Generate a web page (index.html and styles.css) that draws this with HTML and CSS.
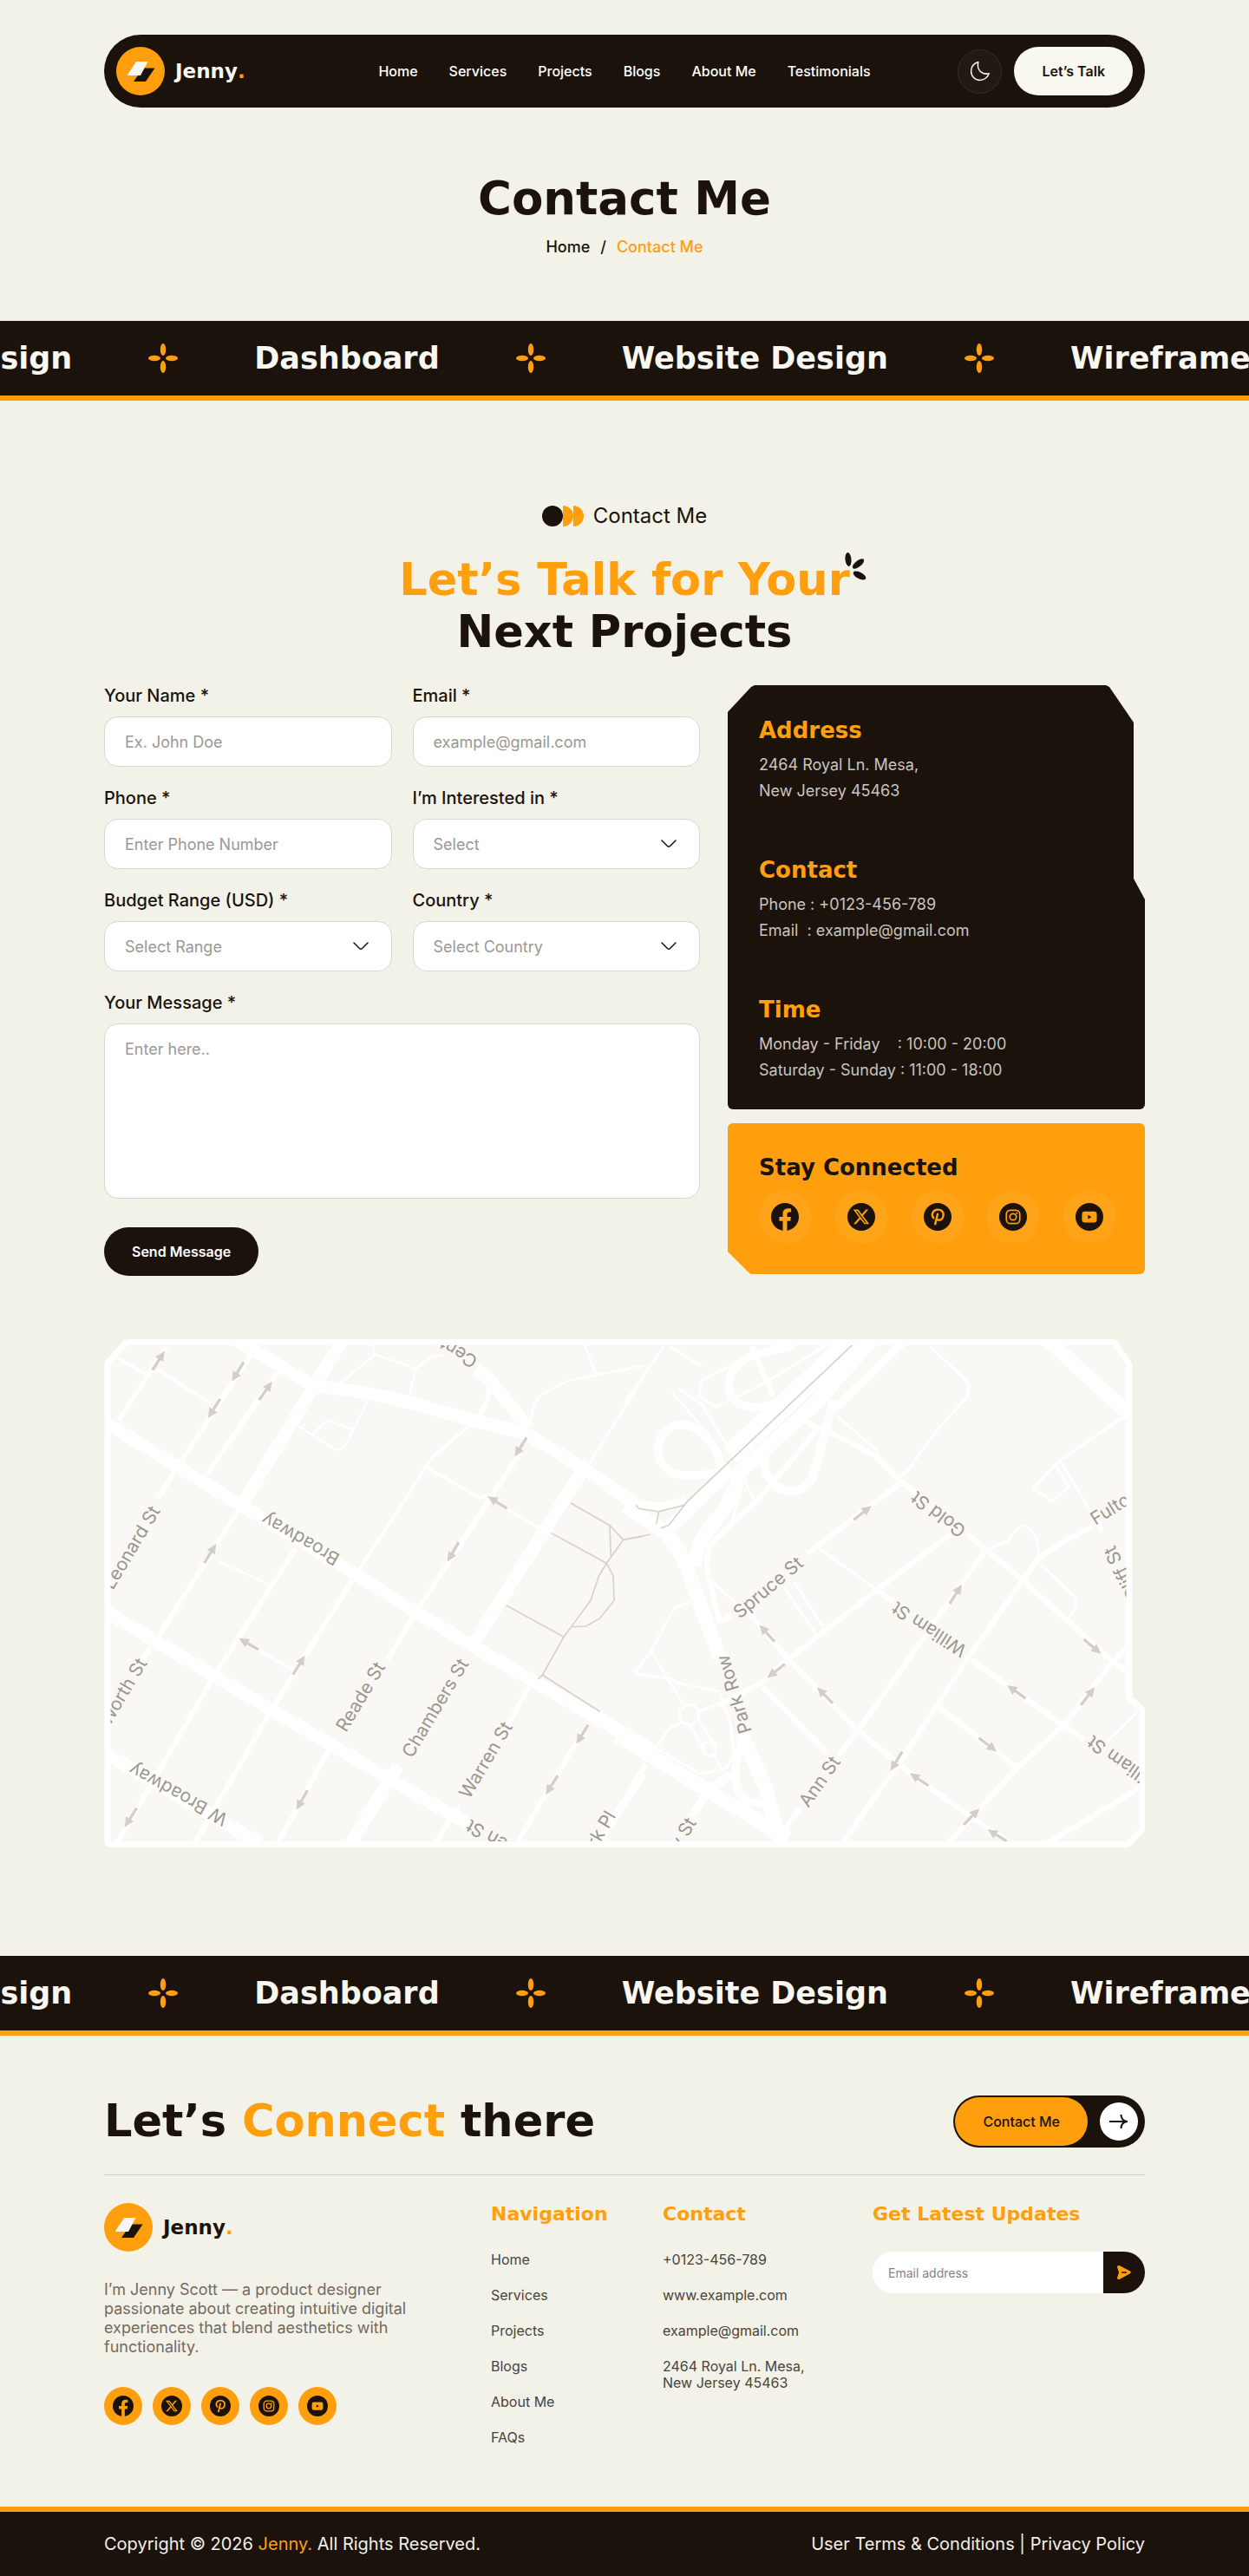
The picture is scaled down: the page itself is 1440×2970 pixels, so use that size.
FILE: index.html
```html
<!DOCTYPE html>
<html lang="en">
<head>
<meta charset="UTF-8">
<meta name="viewport" content="width=device-width, initial-scale=1.0">
<title>Contact Me - Jenny</title>
<link rel="stylesheet" href="styles.css">
</head>
<body>

<!-- shared icons -->
<svg class="sprite" aria-hidden="true">
  <symbol id="logo" viewBox="0 0 56 56">
    <circle cx="28" cy="28" r="28" fill="#ff9f0d"/>
    <path d="M31 24.500h13.500L34 40H20z" fill="#1b120c"/>
    <path d="M23 17h13.500L28 33H12.500z" fill="#f8f7f0"/>
  </symbol>
  <symbol id="star" viewBox="0 0 34 34">
    <ellipse cx="17" cy="7" rx="3.200" ry="7"/>
    <ellipse cx="17" cy="27" rx="3.200" ry="7"/>
    <ellipse cx="7" cy="17" rx="7" ry="3.200"/>
    <ellipse cx="27" cy="17" rx="7" ry="3.200"/>
  </symbol>
  <symbol id="chevron" viewBox="0 0 18 10">
    <path d="M1 1l6.500 6.500q1.500 1.300 3 0L17 1" fill="none" stroke="#1b120c" stroke-width="1.500" stroke-linecap="round"/>
  </symbol>
  <symbol id="facebook" viewBox="0 0 24 24">
    <path fill="#1b120c" d="M24 12.073c0-6.627-5.373-12-12-12s-12 5.373-12 12c0 5.990 4.388 10.954 10.125 11.854v-8.385H7.078v-3.470h3.047V9.430c0-3.007 1.792-4.669 4.533-4.669 1.312 0 2.686.235 2.686.235v2.953H15.830c-1.491 0-1.956.925-1.956 1.874v2.250h3.328l-.532 3.470h-2.796v8.385C19.612 23.027 24 18.062 24 12.073z"/>
  </symbol>
  <symbol id="twitter" viewBox="0 0 24 24">
    <circle cx="12" cy="12" r="12" fill="#1b120c"/>
    <path fill="#ff9f0d" transform="translate(5 5) scale(.58)" d="M18.901 1.153h3.680l-8.040 9.190L24 22.846h-7.406l-5.800-7.584-6.638 7.584H.474l8.600-9.830L0 1.154h7.594l5.243 6.932ZM17.610 20.644h2.039L6.486 3.240H4.298Z"/>
  </symbol>
  <symbol id="pinterest" viewBox="0 0 24 24">
    <circle cx="12" cy="12" r="12" fill="#1b120c"/>
    <path fill="none" stroke="#ff9f0d" stroke-width="1.800" stroke-linecap="round" d="M8.400 12.900C6 9.600 8.200 5.700 12.300 5.700c3 0 4.900 2 4.700 4.500-.2 2.900-1.900 4.600-3.800 4.600-1.100 0-1.900-.6-2.100-1.400M12 9.500L9.900 18.300"/>
  </symbol>
  <symbol id="instagram" viewBox="0 0 24 24">
    <circle cx="12" cy="12" r="12" fill="#1b120c"/>
    <rect x="6.200" y="6.200" width="11.600" height="11.600" rx="3.400" fill="none" stroke="#ff9f0d" stroke-width="1.300"/>
    <circle cx="12" cy="12" r="2.800" fill="none" stroke="#ff9f0d" stroke-width="1.300"/>
    <circle cx="15.200" cy="8.800" r=".8" fill="#ff9f0d"/>
  </symbol>
  <symbol id="youtube" viewBox="0 0 24 24">
    <circle cx="12" cy="12" r="12" fill="#1b120c"/>
    <rect x="5.600" y="7.400" width="12.800" height="9.400" rx="2.400" fill="#ff9f0d"/>
    <path d="M10.800 10.400l3 1.700-3 1.700z" fill="#1b120c"/>
  </symbol>
</svg>

<header class="container">
  <div class="navbar">
    <a href="#" class="logo"><svg><use href="#logo"/></svg><span>Jenny<b>.</b></span></a>
    <nav class="menu">
      <a href="#">Home</a>
      <a href="#">Services</a>
      <a href="#">Projects</a>
      <a href="#">Blogs</a>
      <a href="#">About Me</a>
      <a href="#">Testimonials</a>
    </nav>
    <div class="nav-right">
      <button type="button" class="theme-btn" aria-label="Dark mode">
        <svg viewBox="0 0 24 24"><path d="M9.800 1.500C5 3 1.600 7 1.600 12.300c0 5.700 4.500 10.100 10 10.100 5 0 9.400-3.200 10.600-7.600-8.500 1.700-14.300-4-12.400-13.300z"/></svg>
      </button>
      <a href="#" class="talk-btn">Let’s Talk</a>
    </div>
  </div>
</header>

<section class="hero">
  <h1>Contact Me</h1>
  <p class="breadcrumb"><a href="#">Home</a><span>/</span><a href="#" class="active">Contact Me</a></p>
</section>

<div class="marquee">
  <div class="track">
    <span>Website Design</span>
    <svg><use href="#star"/></svg>
    <span>Dashboard</span>
    <svg><use href="#star"/></svg>
    <span>Website Design</span>
    <svg><use href="#star"/></svg>
    <span>Wireframe</span>
  </div>
</div>

<main class="container">
  <div class="section-head">
    <p class="eyebrow">
      <svg viewBox="0 0 48 24"><path d="M36 0a12 12 0 0 1 0 24zM24 0a12 12 0 0 1 0 24z" fill="#ff9f0d"/><circle cx="12" cy="12" r="12" fill="#1b120c"/></svg>
      Contact Me
    </p>
    <h2>
      <span class="highlight">Let’s Talk for Your<svg viewBox="0 0 26 32" aria-hidden="true"><ellipse cx="4" cy="8" rx="3.500" ry="8" transform="rotate(-5 4 8)"/><ellipse cx="15.500" cy="13" rx="8" ry="3.500" transform="rotate(-38 15.500 13)"/><ellipse cx="17" cy="26.500" rx="8" ry="3.800" transform="rotate(28 17 26.500)"/></svg></span><br>
      Next Projects
    </h2>
  </div>

  <div class="contact">
    <form class="contact-form">
      <div class="field">
        <label for="name">Your Name *</label>
        <input type="text" id="name" placeholder="Ex. John Doe">
      </div>
      <div class="field">
        <label for="email">Email *</label>
        <input type="email" id="email" placeholder="example@gmail.com">
      </div>
      <div class="field">
        <label for="phone">Phone *</label>
        <input type="tel" id="phone" placeholder="Enter Phone Number">
      </div>
      <div class="field">
        <label for="interest">I’m Interested in *</label>
        <div class="select">
          <select id="interest"><option>Select</option></select>
          <svg><use href="#chevron"/></svg>
        </div>
      </div>
      <div class="field">
        <label for="budget">Budget Range (USD) *</label>
        <div class="select">
          <select id="budget"><option>Select Range</option></select>
          <svg><use href="#chevron"/></svg>
        </div>
      </div>
      <div class="field">
        <label for="country">Country *</label>
        <div class="select">
          <select id="country"><option>Select Country</option></select>
          <svg><use href="#chevron"/></svg>
        </div>
      </div>
      <div class="field full">
        <label for="message">Your Message *</label>
        <textarea id="message" placeholder="Enter here.."></textarea>
      </div>
      <button type="submit" class="send-btn">Send Message</button>
    </form>

    <aside>
      <div class="info">
        <div>
          <h3>Address</h3>
          <p>2464 Royal Ln. Mesa,<br>New Jersey 45463</p>
        </div>
        <div>
          <h3>Contact</h3>
          <p>Phone : +0123-456-789<br>Email&nbsp; : example@gmail.com</p>
        </div>
        <div>
          <h3>Time</h3>
          <p>Monday - Friday&nbsp;&nbsp;&nbsp; : 10:00 - 20:00<br>Saturday - Sunday : 11:00 - 18:00</p>
        </div>
      </div>
      <div class="connected">
        <h3>Stay Connected</h3>
        <div class="social-big">
          <a href="#" aria-label="Facebook"><svg><use href="#facebook"/></svg></a>
          <a href="#" aria-label="X"><svg><use href="#twitter"/></svg></a>
          <a href="#" aria-label="Pinterest"><svg><use href="#pinterest"/></svg></a>
          <a href="#" aria-label="Instagram"><svg><use href="#instagram"/></svg></a>
          <a href="#" aria-label="YouTube"><svg><use href="#youtube"/></svg></a>
        </div>
      </div>
    </aside>
  </div>

  <svg class="map" viewBox="0 0 1200 586" role="img" aria-label="Map">
    <defs>
      <path id="frame" d="M5 26L24 5q2-1.500 4-1.500H1163q2 0 3 1.500L1181 27q1 2 1 4V411q0 3 2 4L1196 426q1.500 1 1.500 3V563q0 2-1.500 3L1182 581q-1 1.500-3 1.500H8q-4 0-4-4V30q0-2 1-4z"/>
      <clipPath id="frame-clip"><use href="#frame"/></clipPath>
      <g id="arrow"><path d="M-64-4h36v-9L0 0l-28 13V4h-36z"/></g>
    </defs>
    <use href="#frame" fill="#f9f8f4"/>
    <g clip-path="url(#frame-clip)">
      <!-- west half -->
      <g transform="translate(-20 -24) scale(.408)">
        <g class="road">
          <g stroke-width="36">
            <path d="M40 287L70 305 250 415 440 530 755 720 930 830 1090 925 1270 1030 1600 1222"/>
            <path d="M40 820L200 915 360 1010 520 1105 700 1210 860 1305 1080 1430"/>
            <path d="M40 1222L250 1345 490 1484"/>
            <path d="M420 60L640 190 800 212 900 235 1100 290 1240 325 1400 420 1570 540"/>
            <path d="M724 60L640 195 440 525"/>
            <path d="M1100 145Q1130 160 1160 200L1250 310"/>
            <path d="M1400 430L1090 925M880 1265L745 1484"/>
          </g>
          <g stroke-width="14">
            <path d="M225 80L90 290M465 100L250 430 200 510M540 150L340 440M430 540L205 895M180 930L150 975"/>
            <path d="M590 650L360 1010 85 1484M750 740L520 1110 305 1484M1225 380L930 830 850 965M700 1190L540 1484"/>
            <path d="M1250 1040L1190 1150M1050 1380L985 1484M1400 1170L1215 1484M1575 1290L1450 1484"/>
            <path d="M1135 195Q1140 245 1100 280"/>
          </g>
          <g stroke-width="9">
            <path d="M85 110L170 160M200 145L350 240M1190 540L1290 600M480 935L585 995"/>
            <path d="M1090 295L975 395 770 710M960 420L1110 508 1130 500"/>
          </g>
          <g stroke-width="6">
            <path d="M805 70L815 102 930 142 975 108 1010 104M815 102L715 185M930 142L912 215"/>
            <path d="M600 305L705 372Q725 370 735 350L795 230M640 325L680 288 752 315M370 685L510 750"/>
            <path d="M1405 70L1440 160 1575 132M1440 160L1360 176 1285 215Q1255 245 1255 300M1575 165L1420 410M1450 1111L1568 1185"/>
          </g>
        </g>
        <path class="trail" d="M1368 522L1478 585 1516 626 1570 616M1478 585L1481 672M1313 607L1469 692 1516 626M1469 692L1488 728 1490 798 1450 848 1410 870 1372 872M1469 692L1447 728 1425 795 1372 868 1348 900 1288 1008 1275 1020M1185 811L1348 900M1288 1008L1450 1111"/>
        <g class="arrows">
          <use href="#arrow" transform="translate(220 92) rotate(-58)"/>
          <use href="#arrow" transform="translate(410 178) rotate(122)"/>
          <use href="#arrow" transform="translate(343 282) rotate(122)"/>
          <use href="#arrow" transform="translate(524 178) rotate(-55)"/>
          <use href="#arrow" transform="translate(366 637) rotate(-58)"/>
          <use href="#arrow" transform="translate(430 904) rotate(210)"/>
          <use href="#arrow" transform="translate(617 952) rotate(-58)"/>
          <use href="#arrow" transform="translate(1209 391) rotate(122)"/>
          <use href="#arrow" transform="translate(1133 503) rotate(212)"/>
          <use href="#arrow" transform="translate(1019 688) rotate(120)"/>
          <use href="#arrow" transform="translate(592 1389) rotate(120)"/>
          <use href="#arrow" transform="translate(107 1438) rotate(122)"/>
          <use href="#arrow" transform="translate(1383 1203) rotate(122)"/>
          <use href="#arrow" transform="translate(1297 1346) rotate(122)"/>
        </g>
      </g>
      <!-- east half -->
      <g transform="translate(600 -24) scale(.408)">
        <g class="road">
          <path stroke-width="62" d="M640 70L300 385"/>
          <g stroke-width="40">
            <path d="M700 60L540 240 320 440M0 530L110 600Q160 650 185 730L270 960M300 420L130 590"/>
            <path d="M325 440Q300 520 260 570 195 640 200 700M330 1170L400 1330 440 1484"/>
            <path d="M-20 1180L230 1330 460 1470M1195 60L1430 275"/>
          </g>
          <g stroke-width="24">
            <path d="M0 500Q90 560 175 510M265 435Q190 450 145 440C90 420 80 350 120 315S230 310 265 390L275 430"/>
            <path d="M360 105Q300 130 295 185C295 245 350 270 440 235M360 105L480 76"/>
            <path d="M400 350C380 430 410 480 470 488Q520 485 535 440L570 310 590 230M785 70L590 260"/>
            <path d="M330 1200Q300 1290 325 1340 350 1380 395 1365M300 1290L240 1330 190 1410"/>
          </g>
          <g stroke-width="15">
            <path d="M360 80L420 220M570 320L640 350 710 390 775 455 825 495M970 610L1125 740 1380 970 1430 1005"/>
            <path d="M780 465L515 665M300 840L275 855M920 610L710 770 460 965 380 1035 260 1095"/>
            <path d="M705 765L760 800M980 965L1240 1150 1300 1190M350 830L460 960 660 1165 800 1280 960 1395 1085 1480"/>
            <path d="M1020 655L660 1165 605 1235M495 1385L440 1460M1320 590Q1220 640 1170 680L1125 740 970 960 885 1090 780 1250 615 1484"/>
            <path d="M1430 920L1380 970 1240 1150 1110 1270 990 1400 915 1484M885 1095L1110 1270M1460 1325L1195 1484M390 1040L570 1225"/>
            <path d="M60 1260L-60 1460M500 285L570 325M540 320L380 510 260 620Q220 660 240 740L270 860M1350 600L1325 560"/>
          </g>
          <g stroke-width="7">
            <path d="M865 80L965 175Q980 200 965 225L880 320 800 430 770 450M600 275L710 370 720 400M550 650L710 765"/>
            <path d="M450 760L540 890M480 745L560 870M245 740L340 830M1020 655L1085 628Q1120 570 1140 590 1175 620 1168 680M1165 685L1270 785Q1290 810 1250 850"/>
            <path d="M1415 275L1225 405 1155 480 1210 517 1255 475 1215 410M1230 400L1325 560M1450 1110L1360 1200"/>
            <path d="M135 210L240 330M155 200L220 245 290 360M580 70L400 180 260 250 210 220 220 175 340 110M110 80L0 240M130 80L220 138M-20 150L60 132"/>
            <path d="M185 800L140 820 75 940 28 1003 135 1020 150 1030 270 1055M75 940L165 1090M210 1110L290 1080M165 1140L125 1160 85 1220M185 1150L225 1215M210 1135L255 1205M250 1230L280 1280M-20 1150L215 1288 290 1270 310 1230 300 1150 270 1060"/>
            <circle cx="183" cy="1120" r="28"/>
            <circle cx="240" cy="1215" r="20"/>
            <path d="M340 440Q340 480 375 520M330 480L300 590"/>
          </g>
        </g>
        <path class="trail" d="M645 74L175 520 125 585 102 593M32 528L42 538 97 546 172 527M97 546L90 580M0 625L72 611"/>
        <g class="arrows">
          <use href="#arrow" transform="translate(698 530) rotate(-38)"/>
          <use href="#arrow" transform="translate(381 866) rotate(228)"/>
          <use href="#arrow" transform="translate(403 1016) rotate(142)"/>
          <use href="#arrow" transform="translate(544 1042) rotate(226)"/>
          <use href="#arrow" transform="translate(953 752) rotate(-58)"/>
          <use href="#arrow" transform="translate(1347 948) rotate(40)"/>
          <use href="#arrow" transform="translate(1081 1037) rotate(215)"/>
          <use href="#arrow" transform="translate(1329 1042) rotate(-52)"/>
          <use href="#arrow" transform="translate(1052 1224) rotate(37)"/>
          <use href="#arrow" transform="translate(751 1279) rotate(122)"/>
          <use href="#arrow" transform="translate(806 1285) rotate(214)"/>
          <use href="#arrow" transform="translate(1003 1385) rotate(-46)"/>
          <use href="#arrow" transform="translate(1026 1444) rotate(212)"/>
        </g>
      </g>
      <!-- street names -->
      <g class="street">
        <text transform="translate(10 290) rotate(-59)">Leonard St</text>
        <text transform="translate(6 447) rotate(-59)">Worth St</text>
        <text transform="translate(273 249) rotate(210)">Broadway</text>
        <text transform="translate(144 549) rotate(209)">W Broadway</text>
        <text transform="translate(432 22) rotate(213)">Centre St</text>
        <text transform="translate(279 454) rotate(-59)">Reade St</text>
        <text transform="translate(355 484) rotate(-59)">Chambers St</text>
        <text transform="translate(421 531) rotate(-59)">Warren St</text>
        <text transform="translate(555 609) rotate(-59)">Park Pl</text>
        <text transform="translate(498 595) rotate(209)">Green St</text>
        <text transform="translate(995 218) rotate(217)">Gold St</text>
        <text transform="translate(733 323) rotate(-40)">Spruce St</text>
        <text transform="translate(996 355) rotate(213)">William St</text>
        <text transform="translate(747 452) rotate(-107)">Park Row</text>
        <text transform="translate(812 541) rotate(-55)">Ann St</text>
        <text transform="translate(650 613) rotate(-59)">Dey St</text>
        <text transform="translate(1143 215) rotate(-32)">Fulton St</text>
        <text transform="translate(1195 296) rotate(243)">Cliff St</text>
        <text transform="translate(1220 512) rotate(215)">William St</text>
      </g>
    </g>
    <use href="#frame" fill="none" stroke="#fff" stroke-width="7"/>
  </svg>
</main>

<div class="marquee">
  <div class="track">
    <span>Website Design</span>
    <svg><use href="#star"/></svg>
    <span>Dashboard</span>
    <svg><use href="#star"/></svg>
    <span>Website Design</span>
    <svg><use href="#star"/></svg>
    <span>Wireframe</span>
  </div>
</div>

<footer>
  <div class="container">
    <div class="footer-top">
      <h2>Let’s <span class="highlight">Connect</span> there</h2>
      <a href="#" class="contact-btn">
        <span class="pill">Contact Me</span>
        <span class="circle"><svg viewBox="0 0 22 16"><path d="M0 8h21M13.500 0c0 4 2.500 7.300 7 8-4.500.7-7 4-7 8"/></svg></span>
      </a>
    </div>
    <div class="footer-cols">
      <div class="about">
        <a href="#" class="logo dark"><svg><use href="#logo"/></svg><span>Jenny<b>.</b></span></a>
        <p>I’m Jenny Scott — a product designer passionate about creating intuitive digital experiences that blend aesthetics with functionality.</p>
        <div class="social">
          <a href="#" aria-label="Facebook"><svg><use href="#facebook"/></svg></a>
          <a href="#" aria-label="X"><svg><use href="#twitter"/></svg></a>
          <a href="#" aria-label="Pinterest"><svg><use href="#pinterest"/></svg></a>
          <a href="#" aria-label="Instagram"><svg><use href="#instagram"/></svg></a>
          <a href="#" aria-label="YouTube"><svg><use href="#youtube"/></svg></a>
        </div>
      </div>
      <div>
        <h4>Navigation</h4>
        <ul>
          <li><a href="#">Home</a></li>
          <li><a href="#">Services</a></li>
          <li><a href="#">Projects</a></li>
          <li><a href="#">Blogs</a></li>
          <li><a href="#">About Me</a></li>
          <li><a href="#">FAQs</a></li>
        </ul>
      </div>
      <div>
        <h4>Contact</h4>
        <ul>
          <li><a href="#">+0123-456-789</a></li>
          <li><a href="#">www.example.com</a></li>
          <li><a href="#">example@gmail.com</a></li>
          <li>2464 Royal Ln. Mesa,<br>New Jersey 45463</li>
        </ul>
      </div>
      <div>
        <h4>Get Latest Updates</h4>
        <form class="subscribe">
          <input type="email" placeholder="Email address" aria-label="Email address">
          <button type="submit" aria-label="Subscribe">
            <svg viewBox="0 0 18 18"><path d="M4 1.200L15.500 7.200q2.600 1.600 0 3.400L4 16.800Q.5 18 1.200 14.600L3 9 1.200 3.400Q.5 0 4 1.200z" fill="#ff9f0d"/><path d="M6 9h6" stroke="#1b120c" stroke-width="1.500"/></svg>
          </button>
        </form>
      </div>
    </div>
  </div>
  <div class="copyright">
    <div class="container">
      <p>Copyright © 2026 <a href="#" class="highlight">Jenny.</a> All Rights Reserved.</p>
      <p><a href="#">User Terms &amp; Conditions</a> | <a href="#">Privacy Policy</a></p>
    </div>
  </div>
</footer>

</body>
</html>
```

FILE: styles.css
```css
* {
  box-sizing: border-box;
  margin: 0;
  padding: 0;
}
body {
  font-family: 'Inter', sans-serif;
  font-size: 16px;
  color: #1b120c;
  background-color: #f3f2e8;
  overflow-x: hidden;
}
a {
  color: inherit;
  text-decoration: none;
}
ul {
  list-style: none;
}
svg {
  display: block;
}
h1, h2, h3, h4, .logo, .marquee {
  font-family: 'DejaVu Sans', sans-serif;
  font-weight: 700;
}
h1, h2 {
  font-size: 51px;
  line-height: 60px;
}
h1 {
  font-size: 53px;
}
.sprite {
  position: absolute;
  width: 0;
  height: 0;
}
.container {
  width: 100%;
  max-width: 1200px;
  margin: 0 auto;
}
.highlight {
  color: #ff9f0d;
}

/* header */
.navbar {
  display: grid;
  grid-template-columns: 1fr auto 1fr;
  align-items: center;
  margin-top: 40px;
  padding: 14px;
  background-color: #1b120c;
  border-radius: 42px;
}
.logo {
  display: flex;
  align-items: center;
  gap: 12px;
  font-size: 23px;
  color: #f8f7f0;
}
.logo svg {
  width: 56px;
  height: 56px;
}
.logo b {
  color: #ff9f0d;
}
.logo.dark {
  color: #1b120c;
}
.menu {
  display: flex;
  gap: 36px;
  font-weight: 500;
  color: #fff;
}
.nav-right {
  display: flex;
  justify-content: flex-end;
  align-items: center;
  gap: 14px;
}
.theme-btn {
  width: 51px;
  height: 51px;
  display: flex;
  align-items: center;
  justify-content: center;
  background-color: #211913;
  border: 1px solid #352d27;
  border-radius: 50%;
  cursor: pointer;
}
.theme-btn svg {
  width: 24px;
  height: 24px;
  fill: none;
  stroke: #f8f7f0;
  stroke-width: 1.5;
  stroke-linejoin: round;
}
.talk-btn {
  padding: 0 32px;
  line-height: 56px;
  font-weight: 600;
  background-color: #f8f7f0;
  border-radius: 28px;
}

/* hero */
.hero {
  padding: 75px 0 73px;
  text-align: center;
}
.breadcrumb {
  display: flex;
  justify-content: center;
  gap: 12px;
  margin-top: 14px;
  font-size: 18px;
  line-height: 24px;
  font-weight: 500;
}
.breadcrumb .active {
  color: #ff9f0d;
}

/* marquee */
.marquee {
  overflow: hidden;
  font-size: 35px;
  line-height: 86px;
  color: #f8f7f0;
  background-color: #1b120c;
  border-bottom: 6px solid #ff9f0d;
}
.track {
  display: flex;
  align-items: center;
  gap: 88px;
  margin-left: -224px;
  white-space: nowrap;
}
.track svg {
  flex: none;
  width: 34px;
  height: 34px;
  fill: #ff9f0d;
}

/* contact section */
.section-head {
  padding: 121px 0 31px;
  text-align: center;
}
.eyebrow {
  display: flex;
  justify-content: center;
  gap: 11px;
  margin-bottom: 32px;
  font-size: 24px;
  line-height: 24px;
}
.eyebrow svg {
  width: 48px;
  height: 24px;
}
.section-head .highlight {
  position: relative;
}
.section-head .highlight svg {
  position: absolute;
  top: -2px;
  left: calc(100% - 6px);
  width: 26px;
  height: 32px;
  fill: #1b120c;
}
.contact {
  display: grid;
  grid-template-columns: 687fr 481fr;
  gap: 32px;
  align-items: start;
}
.contact-form {
  display: grid;
  grid-template-columns: 1fr 1fr;
  gap: 24px;
}
.full {
  grid-column: span 2;
}
label {
  display: block;
  margin-bottom: 12px;
  font-size: 20px;
  line-height: 24px;
  font-weight: 500;
}
.field input,
.field select,
.field textarea {
  display: block;
  width: 100%;
  height: 58px;
  padding: 0 23px;
  font-family: 'Inter', sans-serif;
  font-size: 18px;
  color: #9b9895;
  background-color: #fff;
  border: 1px solid #d9d7cc;
  border-radius: 16px;
  outline: none;
  appearance: none;
}
.field textarea {
  height: 202px;
  padding: 18px 23px;
  resize: none;
}
.field input::placeholder,
.field textarea::placeholder {
  color: #9b9895;
}
.select {
  position: relative;
}
.select svg {
  position: absolute;
  top: 24px;
  right: 27px;
  width: 18px;
  height: 10px;
  pointer-events: none;
}
.send-btn {
  justify-self: start;
  height: 56px;
  margin-top: 9px;
  padding: 0 32px;
  font-family: 'Inter', sans-serif;
  font-size: 16px;
  font-weight: 600;
  color: #fff;
  background-color: #1b120c;
  border: none;
  border-radius: 28px;
  cursor: pointer;
}
aside {
  display: grid;
  gap: 16px;
}
h3 {
  font-size: 26px;
  line-height: 30px;
}
.info {
  display: grid;
  gap: 61px;
  padding: 37px 36px 30px;
  font-size: 18px;
  line-height: 30px;
  color: #c8c5bf;
  background-color: #1b120c;
  border-radius: 6px;
  clip-path: polygon(0 31px, 27px 2px, 31px 0, calc(100% - 45px) 0, calc(100% - 41px) 2px, calc(100% - 13px) 43px, calc(100% - 13px) 223px, 100% 247px, 100% 100%, 0 100%);
}
.info h3 {
  margin-bottom: 10px;
  color: #ff9f0d;
}
.connected {
  padding: 36px 34px 36px 36px;
  background-color: #ff9f0d;
  border-radius: 6px;
  clip-path: polygon(0 0, 100% 0, 100% 100%, 27px 100%, 24px calc(100% - 2px), 0 calc(100% - 26px));
}
.social-big {
  display: flex;
  justify-content: space-between;
  margin-top: 12px;
}
.social-big a {
  width: 60px;
  height: 60px;
  display: flex;
  align-items: center;
  justify-content: center;
  background-color: #ffa318;
  border: 1px solid #ffa926;
  border-radius: 50%;
}
.social-big svg {
  width: 32px;
  height: 32px;
}

/* map */
.map {
  width: 100%;
  height: auto;
  margin: 73px 0 125px;
}
.road {
  fill: none;
  stroke: #fff;
  stroke-linejoin: round;
}
.trail {
  fill: none;
  stroke: #d6d2cb;
  stroke-width: 4;
}
.arrows {
  fill: #d3cec7;
}
.street {
  font-size: 21px;
  fill: #9d978e;
}

/* footer */
.footer-top {
  display: flex;
  justify-content: space-between;
  align-items: center;
  padding: 69px 0 31px;
  border-bottom: 1px solid #d3d2c8;
}
.contact-btn {
  display: flex;
  align-items: center;
  gap: 14px;
  padding: 2px 8px 2px 2px;
  background-color: #1b120c;
  border-radius: 30px;
}
.pill {
  padding: 0 32px;
  line-height: 56px;
  font-weight: 500;
  background-color: #ff9f0d;
  border-radius: 28px;
}
.circle {
  width: 44px;
  height: 44px;
  display: flex;
  align-items: center;
  justify-content: center;
  background-color: #fff;
  border-radius: 50%;
}
.circle svg {
  width: 22px;
  height: 16px;
  fill: none;
  stroke: #1b120c;
  stroke-width: 2;
}
.footer-cols {
  display: grid;
  grid-template-columns: 446fr 198fr 242fr 314fr;
  padding: 32px 0 70px;
}
.about p {
  max-width: 360px;
  margin: 33px 0 35px;
  font-size: 18px;
  line-height: 22px;
  color: #76695d;
}
.social {
  display: flex;
  gap: 12px;
}
.social a {
  width: 44px;
  height: 44px;
  display: flex;
  align-items: center;
  justify-content: center;
  background-color: #ff9f0d;
  border-radius: 50%;
}
.social svg {
  width: 24px;
  height: 24px;
}
h4 {
  margin-bottom: 30px;
  font-size: 22px;
  line-height: 26px;
  color: #ff9f0d;
  white-space: nowrap;
}
.footer-cols li {
  margin-bottom: 22px;
  line-height: 19px;
  color: #4a4339;
}
.footer-cols li:last-child {
  margin-bottom: 0;
}
.footer-cols li a {
  display: block;
}
.subscribe {
  display: flex;
  height: 48px;
  border-radius: 24px;
  overflow: hidden;
}
.subscribe input {
  flex: 1;
  min-width: 0;
  padding: 0 18px;
  font-family: 'Inter', sans-serif;
  font-size: 14px;
  border: none;
  outline: none;
}
.subscribe input::placeholder {
  color: #8b8178;
}
.subscribe button {
  width: 48px;
  display: flex;
  align-items: center;
  justify-content: center;
  background-color: #1b120c;
  border: none;
  cursor: pointer;
}
.subscribe svg {
  width: 18px;
  height: 18px;
}
.copyright {
  font-size: 20px;
  line-height: 74px;
  color: #f1f0e8;
  background-color: #1b120c;
  border-top: 6px solid #ff9f0d;
}
.copyright .container {
  display: flex;
  justify-content: space-between;
}
```
